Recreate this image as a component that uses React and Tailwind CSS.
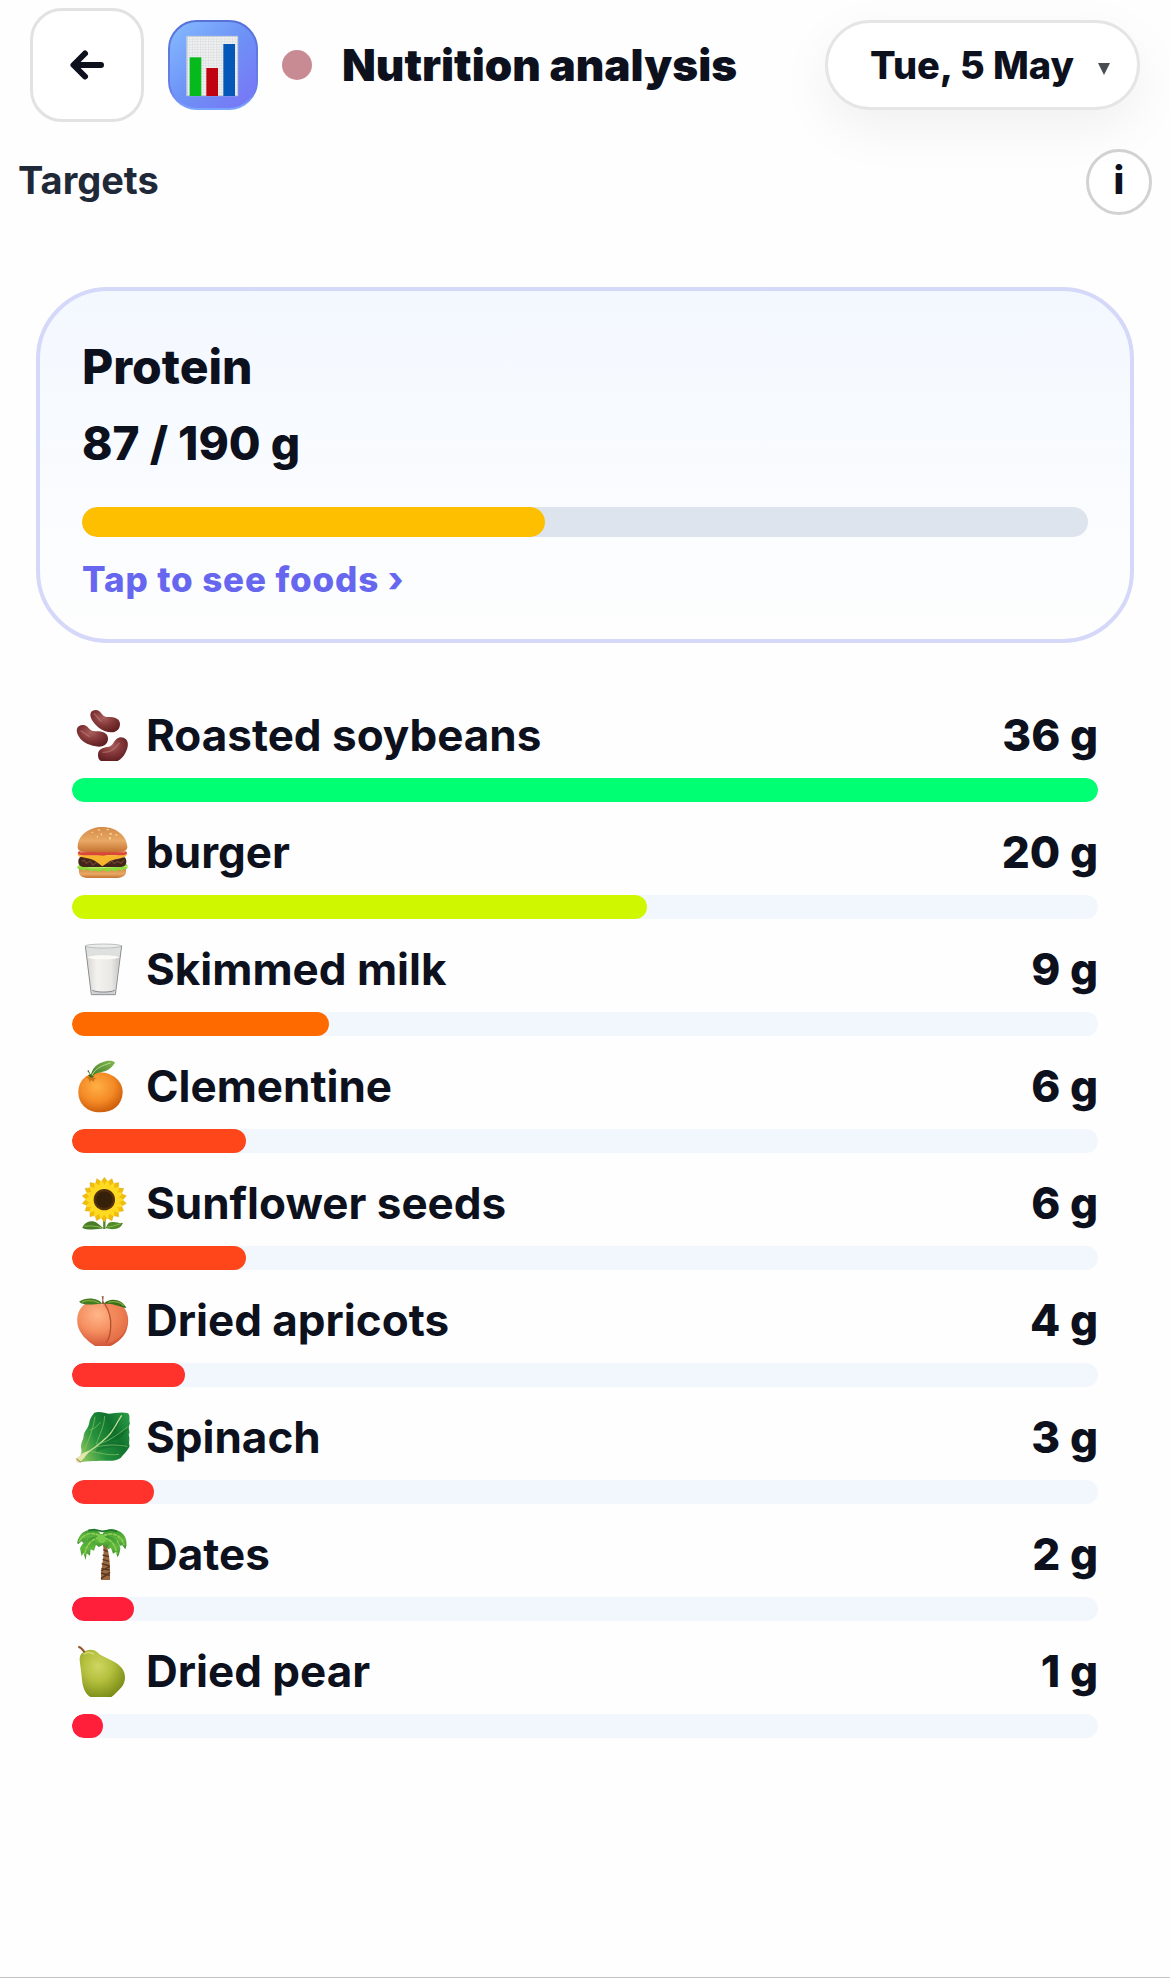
import { useState } from 'react'
import clsx from 'clsx'

const FOODS = [
  { name: 'Roasted soybeans', grams: 36, percent: 100, color: 'bg-[#00ff73]', icon: Beans },
  { name: 'burger', grams: 20, percent: 56, color: 'bg-[#cff800]', icon: Burger },
  { name: 'Skimmed milk', grams: 9, percent: 25, color: 'bg-[#ff6a00]', icon: Milk },
  { name: 'Clementine', grams: 6, percent: 17, color: 'bg-[#ff451a]', icon: Clementine },
  { name: 'Sunflower seeds', grams: 6, percent: 17, color: 'bg-[#ff451a]', icon: Sunflower },
  { name: 'Dried apricots', grams: 4, percent: 11, color: 'bg-[#ff332b]', icon: Peach },
  { name: 'Spinach', grams: 3, percent: 8, color: 'bg-[#ff332b]', icon: Leaf },
  { name: 'Dates', grams: 2, percent: 6, color: 'bg-[#ff1f3a]', icon: Palm },
  { name: 'Dried pear', grams: 1, percent: 3, color: 'bg-[#ff1f3a]', icon: Pear },
]

export default function App() {
  const [day, setDay] = useState('2026-05-05')

  return (
    <main className="min-h-screen pt-2 bg-[#fefefe] border-b border-[#c4c4c4] font-['Inter',sans-serif] text-[#0d111d]">
      <header className="flex items-center gap-6 px-[30px]">
        <button
          type="button"
          aria-label="Back"
          className="flex items-center justify-center shrink-0 w-[114px] h-[114px] rounded-[32px] border-3 border-[#e2e2e2] bg-white"
        >
          <svg viewBox="0 0 36 32" className="w-9 h-8" fill="none" stroke="currentColor" strokeWidth="6" strokeLinecap="round" strokeLinejoin="round">
            <path d="M32 16H5M16 4.500L4.500 16L16 27.500" />
          </svg>
        </button>
        <ChartLogo />
        <span className="shrink-0 w-[30px] h-[30px] rounded-full bg-[#c98b93]" />
        <h1 className="ml-1.5 text-[44px] leading-[56px] font-black whitespace-nowrap">Nutrition analysis</h1>
        <label className="relative flex items-center ml-auto h-[90px] rounded-full border-3 border-[#e5e5e5] bg-white shadow-[0_18px_54px_rgba(0,0,0,0.06)]">
          <select
            aria-label="Day"
            value={day}
            onChange={e => setDay(e.target.value)}
            className="appearance-none field-sizing-content h-full pl-[42px] pr-[63px] rounded-full bg-transparent text-[38px] font-extrabold"
          >
            <option value="2026-05-04">Mon, 4 May</option>
            <option value="2026-05-05">Tue, 5 May</option>
            <option value="2026-05-06">Wed, 6 May</option>
          </select>
          <svg viewBox="0 0 12 12" className="absolute right-[27px] w-3 h-3 top-10 pointer-events-none" fill="#4b4d55">
            <path d="M0 0H12L6 12Z" />
          </svg>
        </label>
      </header>

      <div className="flex items-center justify-between mt-[27px] px-[18px]">
        <h2 className="pb-1 text-[38px] leading-[56px] font-bold text-[#1f2937]">Targets</h2>
        <button
          type="button"
          aria-label="About targets"
          className="flex justify-center w-[66px] h-[66px] rounded-full border-3 border-[#d2d2d2] bg-white text-[38px] leading-[56px] font-extrabold"
        >
          i
        </button>
      </div>

      <section className="mt-[72px] px-9">
        <button
          type="button"
          className="block w-full pt-12 pb-10 px-[42px] text-left rounded-[72px] border-4 border-[#d6d8f9] bg-linear-to-b from-[#f3f8ff] to-[#fefefe]"
        >
          <span className="block text-[48px] leading-[56px] font-extrabold">Protein</span>
          <span className="block mt-5 text-[46px] leading-[56px] font-extrabold">87 / 190 g</span>
          <Bar label="Protein" percent={46} color="bg-[#fdbf00]" className="mt-9 h-[30px] bg-[#dde4ed]" />
          <span className="block mt-[22px] text-[35px] leading-10 font-extrabold tracking-wide text-[#6667ee]">Tap to see foods ›</span>
        </button>
      </section>

      <ul className="flex flex-col gap-6 mt-[66px] px-[72px]">
        {FOODS.map(food => (
          <FoodRow key={food.name} {...food} />
        ))}
      </ul>
    </main>
  )
}

function FoodRow({ name, grams, percent, color, icon: Icon }) {
  return (
    <li>
      <div className="flex items-center gap-[18px] pl-[5px] text-[44px] leading-[53px]">
        <Icon />
        <span className="font-bold">{name}</span>
        <span className="ml-auto font-extrabold">{grams} g</span>
      </div>
      <Bar label={name} percent={percent} color={color} className="mt-4 h-6 bg-[#f2f7fd]" />
    </li>
  )
}

function Bar({ label, percent, color, className }) {
  return (
    <span
      role="progressbar"
      aria-label={label}
      aria-valuenow={percent}
      aria-valuemin={0}
      aria-valuemax={100}
      className={clsx('block rounded-full overflow-hidden', className)}
    >
      <span className={clsx('block h-full rounded-full', color)} style={{ width: `${percent}%` }} />
    </span>
  )
}

function FoodIcon({ children }) {
  return (
    <svg viewBox="0 0 153 153" className="shrink-0 w-[51px] h-[51px] overflow-visible" aria-hidden="true">
      {children}
    </svg>
  )
}

function ChartLogo() {
  return (
    <svg viewBox="0 0 270 270" className="shrink-0 w-[90px] h-[90px]" aria-hidden="true">
      <defs>
        <linearGradient id="logo-bg" x1="0" y1="0" x2="1" y2="1">
          <stop offset="0" stopColor="#86bcff" />
          <stop offset="0.5" stopColor="#6d92f6" />
          <stop offset="1" stopColor="#7a72f6" />
        </linearGradient>
        <linearGradient id="logo-edge" x1="0" y1="0" x2="0" y2="1">
          <stop offset="0" stopColor="#5672d6" />
          <stop offset="0.8" stopColor="#6a7fee" />
          <stop offset="1" stopColor="#7aa6ff" />
        </linearGradient>
        <pattern id="logo-grid" width="8" height="8" patternUnits="userSpaceOnUse">
          <path d="M0 0H8M0 0V8" stroke="#c9cdd0" strokeWidth="2" />
        </pattern>
      </defs>
      <rect x="3" y="3" width="264" height="264" rx="84" fill="url(#logo-bg)" stroke="url(#logo-edge)" strokeWidth="6" />
      <rect x="56" y="48" width="154" height="180" fill="#eff1f1" />
      <rect x="56" y="48" width="154" height="180" fill="url(#logo-grid)" />
      <rect x="57" y="49" width="152" height="178" fill="none" stroke="#c3cad2" strokeWidth="3" />
      <rect x="65" y="112" width="35" height="116" fill="#06b91c" />
      <rect x="115" y="144" width="35" height="84" fill="#bf0311" />
      <rect x="166" y="72" width="35" height="156" fill="#0557b8" />
    </svg>
  )
}

function Beans() {
  return (
    <FoodIcon>
      <defs>
        <radialGradient id="bean" cx="0.45" cy="0.35" r="0.65">
          <stop offset="0" stopColor="#a8605c" />
          <stop offset="0.5" stopColor="#86393a" />
          <stop offset="1" stopColor="#632023" />
        </radialGradient>
      </defs>
      <g fill="url(#bean)">
        <path d="M41 9C46-1 59-2 67 4C75 10 76 19 88 21C103 21 128 21 129 41C129 58 117 68 102 67C78 66 61 52 49 36C42 27 38 17 41 9Z" />
        <path d="M0 56C4 44 20 42 29 49C37 56 40 63 54 64C69 63 91 65 93 84C94 99 83 110 66 110C42 109 15 98 5 79C0 70-2 62 0 56Z" />
        <path d="M63 134C63 117 78 113 91 111C105 109 107 102 113 93C121 80 137 78 147 88C157 99 152 116 145 129C140 140 132 147 122 153H72C65 149 63 142 63 134Z" />
      </g>
      <g fill="none" stroke="#c48781" strokeWidth="4" strokeLinecap="round" opacity="0.55">
        <path d="M52 11C58 16 63 25 72 33" />
        <path d="M12 63C18 64 25 74 37 79" />
        <path d="M78 127C95 127 113 119 126 100" />
      </g>
    </FoodIcon>
  )
}

function Burger() {
  return (
    <FoodIcon>
      <defs>
        <linearGradient id="bun" x1="0" y1="0" x2="0" y2="1">
          <stop offset="0" stopColor="#d58c49" />
          <stop offset="0.55" stopColor="#e9a865" />
          <stop offset="1" stopColor="#c47230" />
        </linearGradient>
      </defs>
      <path d="M6 126H147V135C147 148 133 153 113 153H38C18 153 6 147 6 134Z" fill="url(#bun)" />
      <path d="M2 118C5 110 17 108 30 112H125C137 106 149 108 152 117C153 127 146 127 140 126C134 137 128 124 121 130C113 138 107 126 99 131C90 139 83 127 74 130C64 139 58 127 48 131C38 136 34 124 26 128C15 134 12 124 6 126C1 126 0 122 2 118Z" fill="#8ed93b" />
      <path d="M3 118Q15 112 29 118T57 123T90 121T120 118T151 119" fill="none" stroke="#c4ee76" strokeWidth="3" />
      <rect x="4" y="87" width="144" height="33" rx="15" fill="#42241a" />
      <path d="M14 104L22 99L28 109L39 102L47 114L59 106M94 111L104 101L111 110L122 103L132 109L141 100" fill="none" stroke="#6b402c" strokeWidth="4" />
      <path d="M2 82H151L143 91C124 96 100 99 92 107L76 118L58 104C42 94 20 93 4 88Z" fill="#f7b52f" />
      <path d="M2 83H151" stroke="#ffd468" strokeWidth="3" />
      <path d="M8 73H145C151 73 152 82 146 83C128 87 102 82 78 86C50 83 26 87 7 83C0 81 2 73 8 73Z" fill="#d9473a" />
      <path d="M9 75C47 72 107 73 144 75" stroke="#f49b7c" strokeWidth="3" fill="none" />
      <path d="M2 58C4 24 36 0 76 0C118 0 148 26 151 58C152 68 144 74 131 74C99 76 54 76 22 74C8 74 1 68 2 58Z" fill="url(#bun)" />
      <g fill="#f8d28f">
        <ellipse cx="66" cy="9" rx="4" ry="2" />
        <ellipse cx="92" cy="8" rx="4" ry="2" />
        <ellipse cx="46" cy="16" rx="3" ry="2" />
        <ellipse cx="73" cy="22" rx="2" ry="4" />
        <ellipse cx="101" cy="20" rx="4" ry="3" />
        <ellipse cx="99" cy="34" rx="3" ry="4" />
        <ellipse cx="61" cy="29" rx="2" ry="3" />
        <ellipse cx="118" cy="24" rx="4" ry="2" />
      </g>
    </FoodIcon>
  )
}

function Milk() {
  return (
    <FoodIcon>
      <defs>
        <linearGradient id="milk" x1="0" y1="0" x2="1" y2="0">
          <stop offset="0" stopColor="#d8d7d5" />
          <stop offset="0.3" stopColor="#f3f2ee" />
          <stop offset="0.75" stopColor="#eae8e4" />
          <stop offset="1" stopColor="#c9c8c8" />
        </linearGradient>
      </defs>
      <path d="M25 5C42-2 115-2 134 5L115 151H43Z" fill="#dedfdf" />
      <path d="M31 39C48 33 109 33 127 39L113 138C99 144 59 144 47 138Z" fill="url(#milk)" />
      <ellipse cx="79" cy="40" rx="48" ry="6" fill="#fbfaf6" />
      <path d="M47 140C59 146 100 146 112 140L111 150H47Z" fill="#cfd0d1" />
      <path d="M25 5L43 152H115L134 5" fill="none" stroke="#8b8d90" strokeWidth="3" />
      <ellipse cx="79" cy="6" rx="54" ry="6" fill="#ececec" stroke="#a7a9aa" strokeWidth="2" />
      <path d="M46 139C61 146 99 146 113 139" fill="none" stroke="#85878a" strokeWidth="3" />
    </FoodIcon>
  )
}

function Clementine() {
  return (
    <FoodIcon>
      <defs>
        <radialGradient id="orange" cx="0.42" cy="0.35" r="0.65">
          <stop offset="0" stopColor="#ffb045" />
          <stop offset="0.6" stopColor="#f48a26" />
          <stop offset="1" stopColor="#cf5f0c" />
        </radialGradient>
        <linearGradient id="orange-leaf" x1="0" y1="1" x2="1" y2="0">
          <stop offset="0" stopColor="#3f7a25" />
          <stop offset="1" stopColor="#82b852" />
        </linearGradient>
      </defs>
      <path d="M4 93C4 58 31 34 69 34C108 35 138 62 137 95C135 132 108 154 69 154C29 154 4 128 4 93Z" fill="url(#orange)" />
      <path d="M27 48C34 48 40 44 44 47C50 48 55 52 60 52C53 54 50 57 51 63C44 57 41 54 38 66C38 55 34 53 27 48Z" fill="#cb7419" />
      <path d="M41 47C44 22 61 7 85 1C98-2 110 0 114 5C107 15 99 25 86 30C70 35 55 34 45 48Z" fill="url(#orange-leaf)" />
      <path d="M45 43C54 23 73 14 101 6" fill="none" stroke="#b9d982" strokeWidth="3" />
      <path d="M34 27L43 44L52 47L42 50L33 43L39 40L31 30Z" fill="#3d6a20" />
    </FoodIcon>
  )
}

function Sunflower() {
  const petals = Array.from({ length: 18 }, (_, i) => i * 20)
  return (
    <FoodIcon>
      <path d="M82 115V153" stroke="#54852f" strokeWidth="7" />
      <path d="M79 151C63 155 30 157 16 150L18 145C28 130 46 125 61 136C68 142 73 145 79 151Z" fill="#477d24" />
      <path d="M86 150C92 141 92 132 105 132C117 130 128 137 138 134C134 149 116 158 87 151Z" fill="#518a29" />
      <path d="M22 145C40 143 54 143 73 149M91 147C107 146 116 141 131 137" stroke="#94b957" strokeWidth="3" fill="none" />
      {petals.map(angle => (
        <path key={angle} d="M69 37Q67 15 82-2Q99 15 95 37Z" fill="#f0bd0a" stroke="#d89d06" strokeWidth="1" transform={`rotate(${angle} 82 65)`} />
      ))}
      {petals.map(angle => (
        <path key={angle} d="M74 36Q72 18 82 6Q93 18 91 36Z" fill="#ffda22" transform={`rotate(${angle + 10} 82 65)`} />
      ))}
      <circle cx="82" cy="65" r="32" fill="#4b2b0b" />
      <circle cx="82" cy="65" r="24" fill="#352009" />
      <circle cx="82" cy="65" r="29" fill="none" stroke="#6a4411" strokeWidth="3" strokeDasharray="3 4" />
    </FoodIcon>
  )
}

function Peach() {
  return (
    <FoodIcon>
      <defs>
        <radialGradient id="peach" cx="0.4" cy="0.3" r="0.75">
          <stop offset="0" stopColor="#ffb68a" />
          <stop offset="0.5" stopColor="#f58f60" />
          <stop offset="1" stopColor="#cf4f33" />
        </radialGradient>
      </defs>
      <path d="M77 31C63 14 37 16 19 31C-1 49-4 80 7 105C18 127 35 140 54 153H101C125 140 141 126 149 104C160 73 151 42 129 28C111 17 91 17 77 31Z" fill="url(#peach)" />
      <path d="M77 29C97 48 102 75 101 97C100 122 93 137 86 146C119 141 147 117 151 80C154 49 139 20 106 21C94 21 84 24 77 29Z" fill="#ee7c50" opacity="0.5" />
      <path d="M84 27C92 40 103 68 101 96C100 120 96 132 88 144" fill="none" stroke="#b4512f" strokeWidth="4" />
      <path d="M77 28C66 9 29 4 6 20C24 35 53 26 73 26Z" fill="#417d20" />
      <path d="M81 25C98 7 136 11 148 39C128 36 104 22 83 27Z" fill="#356f19" />
      <path d="M15 21C32 15 52 17 67 24M94 22C109 17 129 20 141 32" fill="none" stroke="#86a742" strokeWidth="4" />
      <path d="M74 4L80 3L79 17L84 28H74L76 15Z" fill="#925f43" />
    </FoodIcon>
  )
}

function Leaf() {
  return (
    <FoodIcon>
      <defs>
        <linearGradient id="leaf" x1="0" y1="0.7" x2="1" y2="0.2">
          <stop offset="0" stopColor="#86c45c" />
          <stop offset="0.35" stopColor="#25913c" />
          <stop offset="0.7" stopColor="#10732e" />
          <stop offset="1" stopColor="#279744" />
        </linearGradient>
      </defs>
      <path d="M1 143C9 132 15 127 13 111C9 94 19 86 20 72C21 57 35 49 37 31C40 15 47 9 52 2C66-3 86 3 94 5C112 5 133-2 153 4C161 12 155 24 159 35C150 48 162 58 155 68C160 80 154 91 158 102C151 118 140 126 132 137C113 151 91 145 69 146C44 147 21 148 8 151Z" fill="url(#leaf)" />
      <path d="M61 105C84 76 102 53 129 14C132 28 121 49 101 72C120 65 139 52 154 47C147 68 125 84 94 90C116 92 133 92 153 103C124 102 88 105 56 121Z" fill="#075b25" opacity="0.35" />
      <path d="M0 141C32 124 76 91 99 66C112 50 121 30 134 10" fill="none" stroke="#c3e09a" strokeWidth="4" />
      <path d="M16 130C26 98 46 69 54 14M58 97C68 64 81 47 83 12M67 94C92 91 119 69 152 45M57 105C88 97 124 98 151 103M39 119C62 120 91 132 126 127M38 55L54 47L71 31M89 77L118 39" fill="none" stroke="#8bc768" strokeWidth="2" />
      <path d="M-2 139L18 123L39 115L22 137L7 153L-2 151Z" fill="#e4e5b0" />
      <path d="M-2 140L12 151" stroke="#b59962" strokeWidth="4" />
    </FoodIcon>
  )
}

function Palm() {
  return (
    <FoodIcon>
      <defs>
        <linearGradient id="palm" x1="0" y1="0" x2="0" y2="1">
          <stop offset="0" stopColor="#3b982f" />
          <stop offset="0.5" stopColor="#61b83f" />
          <stop offset="1" stopColor="#3b8c2c" />
        </linearGradient>
      </defs>
      <path d="M77 46C86 76 71 111 72 153H99C100 118 99 79 88 45Z" fill="#9a693e" />
      <path d="M79 62L92 68M77 78L96 83M77 91L96 97M74 104L98 111M73 119L98 123M72 132L98 139M98 113L72 126M99 130L72 149" stroke="#563521" strokeWidth="4" />
      <g fill="url(#palm)">
        <path d="M73 19C62-5 26-1 11 17C2 28-2 45 4 45L15 36L18 43L33 31L35 39L52 27L64 32L77 37Z" />
        <path d="M75 23C42 15 17 39 9 58L14 82L19 71L26 93L29 73L39 80L41 61L51 65L57 47L68 49Z" />
        <path d="M76 17C84-6 121-2 138 15C150 28 151 48 145 61L136 49L129 50L121 35L111 40L102 27L91 35L78 28Z" />
        <path d="M76 22C103 14 128 39 130 56C130 68 125 78 122 85L116 69L108 74L102 57L93 61L86 44Z" />
        <path d="M73 15C51 24 48 45 66 54L79 47L91 57C104 44 91 21 73 15Z" />
      </g>
      <path d="M69 20C41 6 18 15 5 40M69 26C43 28 26 51 22 80M78 21C103 8 132 15 141 48M80 27C105 31 115 51 120 75" fill="none" stroke="#8fce55" strokeWidth="5" strokeDasharray="13 2" />
      <path d="M34 4L52 2L75 7L104 3L119 7" fill="none" stroke="#227729" strokeWidth="5" />
      <path d="M61 20C75 11 89 22 86 35C78 48 59 43 61 20Z" fill="#78cb4d" />
    </FoodIcon>
  )
}

function Pear() {
  return (
    <FoodIcon>
      <defs>
        <radialGradient id="pear" cx="0.4" cy="0.35" r="0.7">
          <stop offset="0" stopColor="#d0d662" />
          <stop offset="0.45" stopColor="#b4c03e" />
          <stop offset="1" stopColor="#7a8b16" />
        </radialGradient>
      </defs>
      <path d="M20 19C27 10 49 7 60 18C70 29 85 33 103 43C130 57 144 71 144 95C143 121 127 129 113 145C109 149 106 151 103 153H41C26 145 17 125 15 101C13 79 10 60 8 43C7 30 12 22 20 19Z" fill="url(#pear)" />
      <path d="M20 25C29 17 42 17 51 25" fill="none" stroke="#dce383" strokeWidth="5" opacity="0.7" />
      <path d="M4 2C13 4 17 11 23 19" fill="none" stroke="#965326" strokeWidth="6" />
    </FoodIcon>
  )
}
